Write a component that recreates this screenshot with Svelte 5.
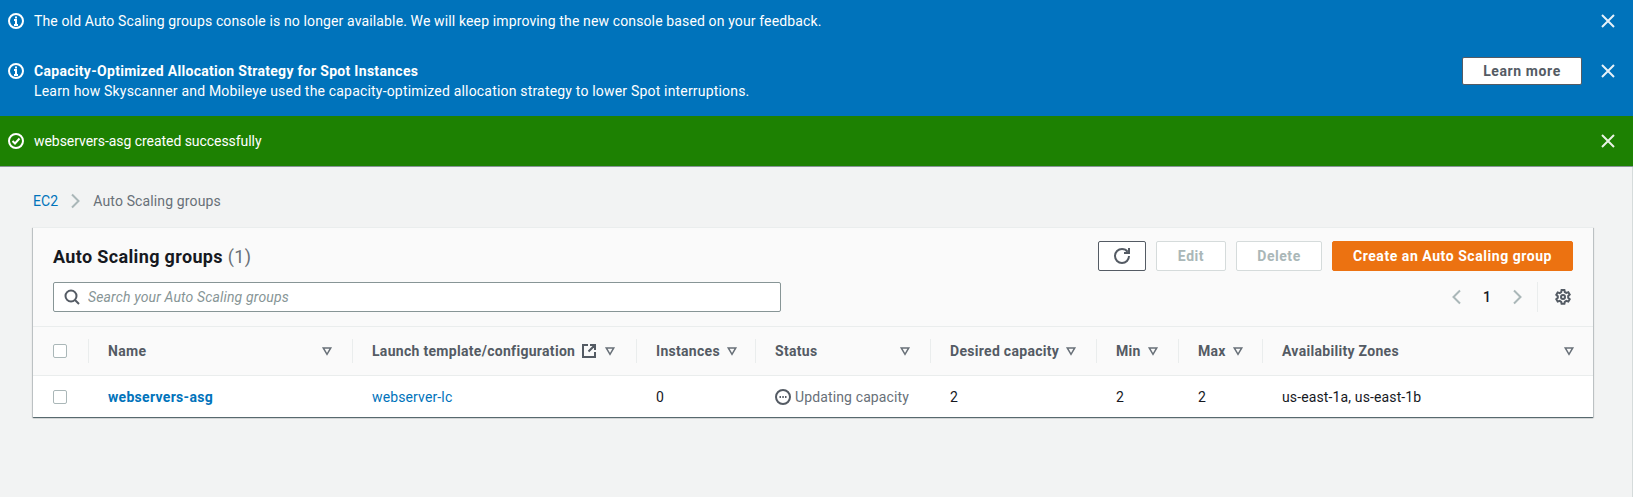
<script>
	const columns = [
		{ label: 'Name', width: 264 },
		{ label: 'Launch template/configuration', width: 284, external: true, tight: true },
		{ label: 'Instances', width: 119, tight: true },
		{ label: 'Status', width: 175 },
		{ label: 'Desired capacity', width: 166, tight: true },
		{ label: 'Min', width: 82, tight: true },
		{ label: 'Max', width: 84, tight: true },
		{ label: 'Availability Zones', width: 331 }
	];
</script>

{#snippet close()}
	<button class="close" aria-label="Dismiss">
		<svg viewBox="0 0 16 16" width="16" height="16"><path d="M2 2l12 12M14 2L2 14" /></svg>
	</button>
{/snippet}

{#snippet info()}
	<svg class="flash-icon" viewBox="0 0 16 16" width="16" height="16">
		<circle cx="8" cy="8" r="7" />
		<path d="M6 7h2v5M6 12h4M8 3.500v2" />
	</svg>
{/snippet}

{#snippet caret()}
	<svg class="caret" viewBox="0 0 16 16" width="12" height="12"><path d="M3 4h10L8 12.500z" /></svg>
{/snippet}

<div class="page">
	<div class="flash blue">
		{@render info()}
		<div class="flash-body">The old Auto Scaling groups console is no longer available. We will keep improving the new console based on your feedback.</div>
		{@render close()}
	</div>
	<div class="flash blue double">
		{@render info()}
		<div class="flash-body">
			<strong>Capacity-Optimized Allocation Strategy for Spot Instances</strong>
			<div class="detail">Learn how Skyscanner and Mobileye used the capacity-optimized allocation strategy to lower Spot interruptions.</div>
		</div>
		<button class="learn">Learn more</button>
		{@render close()}
	</div>
	<div class="flash green">
		<svg class="flash-icon" viewBox="0 0 16 16" width="16" height="16">
			<circle cx="8" cy="8" r="7" />
			<path d="M4.500 8l2.500 2.500 4.500-5" />
		</svg>
		<div class="flash-body">webservers-asg created successfully</div>
		{@render close()}
	</div>

	<main>
		<nav class="crumbs">
			<a href="#ec2">EC2</a>
			<svg viewBox="0 0 16 16" width="16" height="16"><path d="M5 1.500L11.500 8 5 14.500" /></svg>
			<span>Auto Scaling groups</span>
		</nav>

		<section class="card">
			<header>
				<div class="top">
					<h2>Auto Scaling groups <span>(1)</span></h2>
					<div class="actions">
						<button class="btn refresh" aria-label="Refresh">
							<svg viewBox="0 0 16 16" width="16" height="16">
								<path d="M10 5h5V0" />
								<path d="M15 8a7 7 0 0 1-7 7 7 7 0 0 1-7-7 7 7 0 0 1 7-7 6.950 6.950 0 0 1 5.630 2.890" />
							</svg>
						</button>
						<button class="btn off edit">Edit</button>
						<button class="btn off delete">Delete</button>
						<button class="btn primary">Create an Auto Scaling group</button>
					</div>
				</div>
				<div class="tools">
					<label class="search">
						<svg viewBox="0 0 16 16" width="16" height="16">
							<circle cx="7" cy="7" r="5.500" />
							<path d="M11 11l4 4" />
						</svg>
						<input placeholder="Search your Auto Scaling groups" />
					</label>
					<div class="pager">
						<svg class="chev" viewBox="0 0 16 16" width="16" height="16"><path d="M11 1.500L4.500 8l6.500 6.500" /></svg>
						<span>1</span>
						<svg class="chev" viewBox="0 0 16 16" width="16" height="16"><path d="M5 1.500L11.500 8 5 14.500" /></svg>
						<i class="divider"></i>
						<svg class="gear" viewBox="0 0 16 16" width="16" height="16">
							<path d="M6.600 1h2.800l.4 2 1.500.9 2-.7 1.400 2.400-1.500 1.400v1.800l1.500 1.400-1.400 2.400-2-.7-1.500.9-.4 2H6.600l-.4-2-1.500-.9-2 .7-1.400-2.400 1.500-1.400V7.200L1.300 5.800l1.400-2.400 2 .7 1.500-.9z" />
							<circle cx="8" cy="8" r="2" />
						</svg>
					</div>
				</div>
			</header>

			<table>
				<colgroup>
					<col style="width: 55px" />
					{#each columns as col}
						<col style="width: {col.width}px" />
					{/each}
				</colgroup>
				<thead>
					<tr>
						<th class="check"><i class="box"></i></th>
						{#each columns as col}
							<th>
								<div class="th" class:tight={col.tight}>
									<span>{col.label}</span>
									{#if col.external}
										<svg class="ext" viewBox="0 0 16 16" width="16" height="16">
											<path d="M7 2H2v12h12V9M9 2h5v5M14 2L7.500 8.500" />
										</svg>
									{/if}
									{@render caret()}
								</div>
							</th>
						{/each}
					</tr>
				</thead>
				<tbody>
					<tr>
						<td class="check"><i class="box"></i></td>
						<td><a class="name" href="#asg">webservers-asg</a></td>
						<td><a href="#lc">webserver-lc</a></td>
						<td>0</td>
						<td>
							<div class="status">
								<svg viewBox="0 0 16 16" width="16" height="16">
									<circle cx="8" cy="8" r="7" />
									<path d="M4.500 8h1.500M7.300 8h1.500M10 8h1.500" />
								</svg>
								Updating capacity
							</div>
						</td>
						<td>2</td>
						<td>2</td>
						<td>2</td>
						<td>us-east-1a, us-east-1b</td>
					</tr>
				</tbody>
			</table>
		</section>
	</main>
</div>

<style>
	:global(body) {
		background: #fff;
	}

	.page {
		width: 1633px;
		font-family: Roboto, 'Liberation Sans', sans-serif;
		font-size: 14px;
		line-height: 20px;
		letter-spacing: 0.13px;
		color: #16191f;
	}

	svg {
		display: block;
		flex: none;
		fill: none;
		stroke: currentColor;
		stroke-width: 2;
	}

	strong,
	th,
	.name {
		font-weight: 700;
		letter-spacing: 0.3px;
	}

	/* flash bars */
	.flash {
		display: flex;
		align-items: center;
		gap: 10px;
		height: 42px;
		padding: 0 17px 0 8px;
		color: #fff;
	}

	.blue {
		background: #0073bb;
	}

	.double {
		align-items: flex-start;
		height: 74px;
		box-sizing: border-box;
		padding-top: 19px;
	}

	.detail {
		letter-spacing: 0.186px;
	}

	.green {
		height: 51px;
		box-sizing: border-box;
		background: #1d8102;
		border-bottom: 1px solid #879596;
		letter-spacing: -0.05px;
	}

	.double .flash-icon {
		margin-top: 2px;
	}

	.flash-body {
		flex: 1;
	}

	.close {
		display: block;
		padding: 0;
		border: 0;
		background: none;
		color: #fff;
		opacity: 0.9;
	}

	.double .close {
		margin-top: 2px;
	}

	.learn {
		width: 120px;
		height: 28px;
		margin: -4px 8px 0 0;
		padding: 0;
		border: 1px solid #545b64;
		border-radius: 2px;
		background: #fff;
		color: #545b64;
		font: 700 14px/20px Roboto, 'Liberation Sans', sans-serif;
		letter-spacing: 0.6px;
	}

	/* content */
	main {
		min-height: 330px;
		box-sizing: border-box;
		padding: 0 39px 0 33px;
		background: #f2f3f3;
		border-right: 1px solid #d5dbdb;
	}

	.crumbs {
		display: flex;
		align-items: center;
		gap: 9px;
		height: 60px;
		box-sizing: border-box;
		padding-top: 8px;
		color: #687078;
	}

	.crumbs span {
		margin-left: 1px;
	}

	.crumbs a,
	td a {
		color: #0073bb;
		text-decoration: none;
	}

	.crumbs svg {
		stroke: #aab7b8;
	}

	.card {
		background: #fff;
		box-shadow: 0 1px 1px 0 rgba(0, 28, 36, 0.5), 1px 1px 1px 0 rgba(0, 28, 36, 0.15), -1px 1px 1px 0 rgba(0, 28, 36, 0.15);
		border-top: 1px solid #eaeded;
	}

	header {
		height: 99px;
		box-sizing: border-box;
		padding: 13px 20px 0;
		background: #fafafa;
		border-bottom: 1px solid #eaeded;
	}

	.top {
		display: flex;
		justify-content: space-between;
	}

	h2 {
		margin: 0;
		padding-top: 1px;
		font-size: 18px;
		line-height: 30px;
		font-weight: 700;
		letter-spacing: 0.35px;
	}

	h2 span {
		font-weight: 400;
		color: #687078;
	}

	.actions {
		display: flex;
		gap: 10px;
	}

	.btn {
		height: 30px;
		padding: 0;
		border: 1px solid #545b64;
		border-radius: 2px;
		background: #fff;
		color: #545b64;
		font: 700 14px/20px Roboto, 'Liberation Sans', sans-serif;
		letter-spacing: 0.55px;
	}

	.refresh {
		display: flex;
		align-items: center;
		justify-content: center;
		width: 48px;
	}

	.off {
		border-color: #d5dbdb;
		color: #aab7b8;
	}

	.edit {
		width: 70px;
	}

	.delete {
		width: 86px;
	}

	.primary {
		width: 241px;
		border-color: #ec7211;
		background: #ec7211;
		color: #fff;
	}

	.tools {
		display: flex;
		justify-content: space-between;
		margin-top: 10px;
	}

	.search {
		display: flex;
		align-items: center;
		gap: 8px;
		width: 728px;
		height: 30px;
		box-sizing: border-box;
		padding: 0 10px;
		border: 1px solid #879596;
		border-radius: 2px;
		background: #fff;
		color: #545b64;
	}

	.search input {
		flex: 1;
		padding: 0;
		border: 0;
		outline: 0;
		font: italic 14px/20px Roboto, 'Liberation Sans', sans-serif;
		letter-spacing: 0.15px;
	}

	.search input::placeholder {
		color: #879596;
		opacity: 1;
	}

	.pager {
		display: flex;
		align-items: center;
	}

	.pager span {
		width: 44px;
		text-align: center;
		font-weight: 500;
	}

	.chev {
		color: #aab7b8;
	}

	.divider {
		width: 1px;
		height: 30px;
		margin: 0 17px 0 12px;
		background: #eaeded;
	}

	.gear {
		margin-right: 2px;
		color: #545b64;
	}

	/* table */
	table {
		width: 100%;
		table-layout: fixed;
		border-collapse: collapse;
	}

	th {
		height: 48px;
		padding: 0;
		background: #fafafa;
		border-bottom: 1px solid #eaeded;
		color: #545b64;
		text-align: left;
	}

	.th {
		display: flex;
		align-items: center;
		height: 24px;
		padding: 0 19px;
		border-left: 1px solid #eaeded;
	}

	th:last-child .th {
		padding-right: 18px;
	}

	.th span {
		margin-right: auto;
		white-space: nowrap;
	}

	.th.tight span {
		margin-right: 6px;
	}

	.caret {
		color: #687078;
	}

	.ext {
		margin-right: 7px;
		color: #545b64;
	}

	td {
		height: 41px;
		padding: 0 0 0 20px;
	}

	th.check,
	td.check {
		padding-left: 20px;
	}

	.box {
		display: block;
		width: 12px;
		height: 12px;
		border: 1px solid #aab7b8;
		border-radius: 2px;
		background: #fff;
	}

	.status {
		display: flex;
		align-items: center;
		gap: 4px;
		color: #687078;
	}

	.status svg {
		color: #545b64;
	}
</style>
